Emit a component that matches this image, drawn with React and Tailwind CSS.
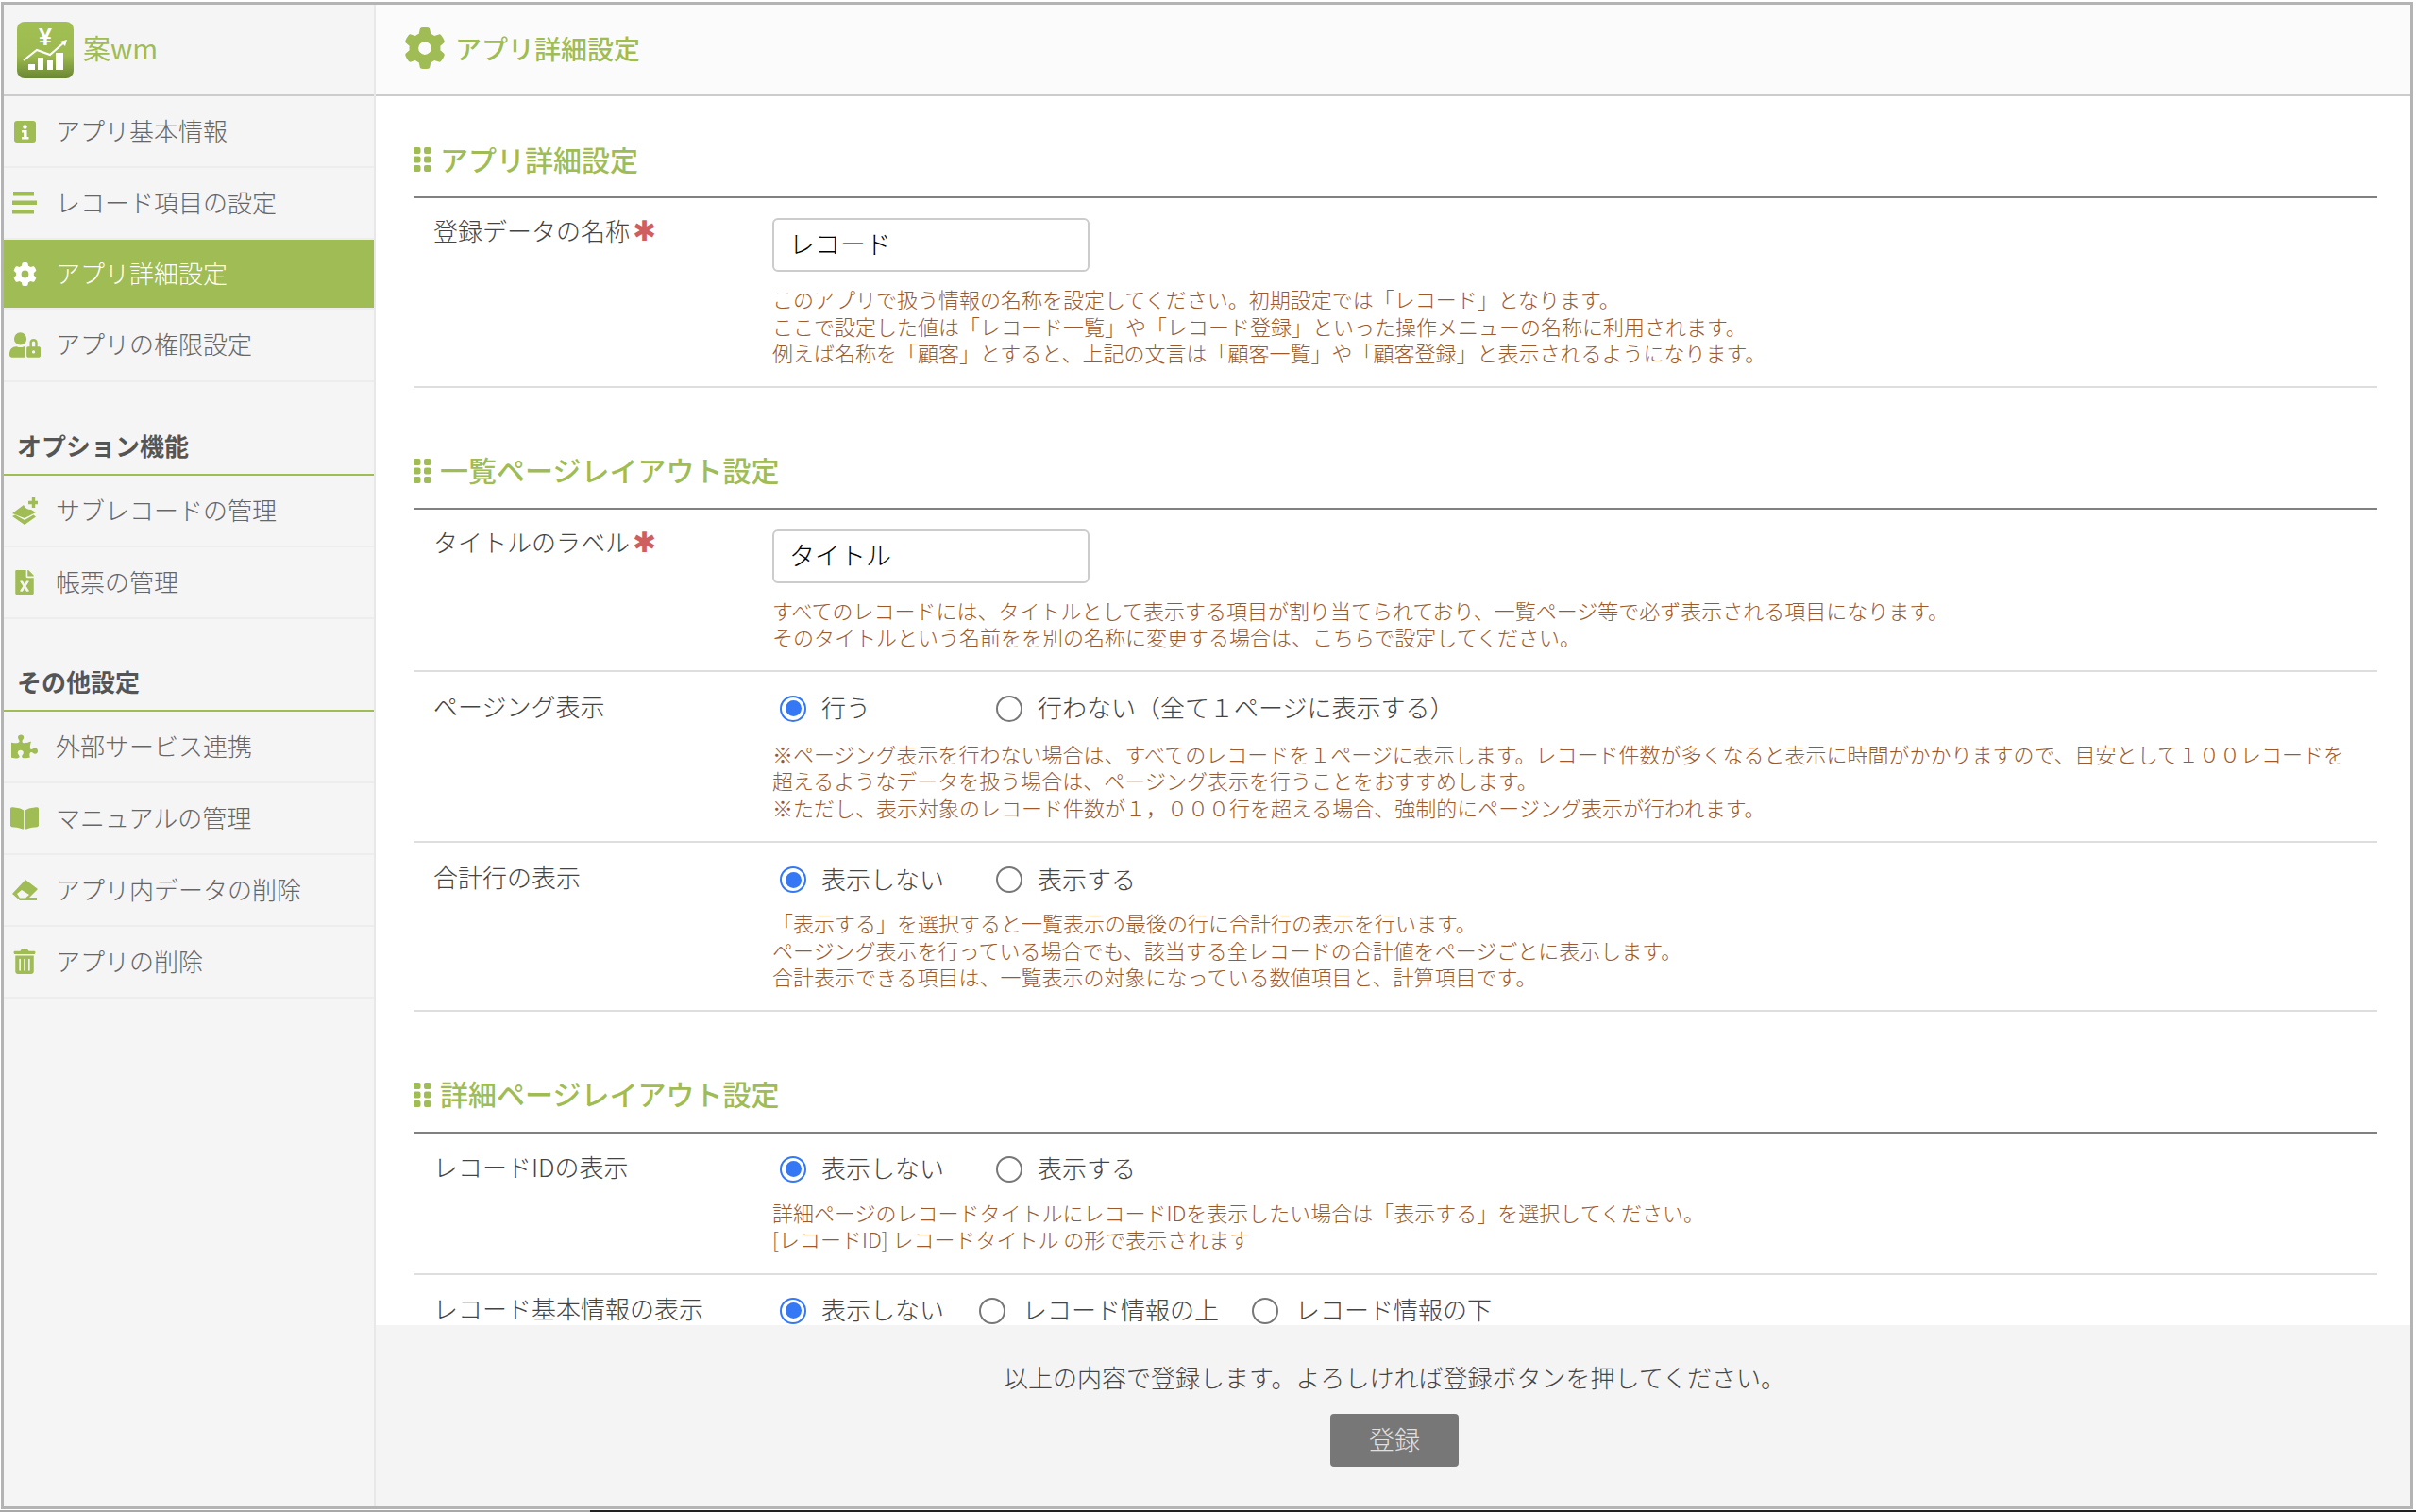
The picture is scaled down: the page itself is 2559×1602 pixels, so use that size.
import React from "react";
import { FaUserLock, FaFileExcel, FaPuzzlePiece, FaBookOpen, FaTrashAlt } from "react-icons/fa";
import { FaGear } from "react-icons/fa6";

const Logo = () => (
  <svg width="60" height="60" viewBox="0 0 60 60" className="shrink-0">
    <defs>
      <linearGradient id="lg" x1="0" y1="0" x2="0" y2="1">
        <stop offset="0" stopColor="#a2bf54" />
        <stop offset="0.6" stopColor="#9dba50" />
        <stop offset="1" stopColor="#6a8734" />
      </linearGradient>
    </defs>
    <rect width="60" height="60" rx="8" fill="url(#lg)" />
    <text x="30" y="25" textAnchor="middle" fontSize="25" fontWeight="700" fill="#fff" fontFamily="Liberation Sans, sans-serif">¥</text>
    <path d="M7 41 L21 30 L35 35 L51 21" stroke="#fff" strokeWidth="2" fill="none" />
    <path d="M46 21 L53 19 L51 26 Z" fill="#fff" />
    <rect x="12" y="45" width="7" height="6" fill="#fff" />
    <rect x="22" y="38" width="6" height="13" fill="#fff" />
    <rect x="32" y="41" width="6" height="10" fill="#fff" />
    <rect x="41" y="33" width="8" height="18" fill="#fff" />
  </svg>
);

const InfoIcon = () => (
  <svg width="23" height="23" viewBox="0 0 23 23">
    <rect width="23" height="23" rx="3" fill="#a0bc54" />
    <circle cx="11.5" cy="6.5" r="2.2" fill="#fff" />
    <path d="M8 10h5.5v7H15.5v2.5H8V17h2v-4.5H8z" fill="#fff" />
  </svg>
);

const BarsIcon = () => (
  <svg width="26" height="24" viewBox="0 0 26 24">
    <rect x="1" y="0" width="22" height="4.5" fill="#a0bc54" />
    <rect x="0" y="9.5" width="26" height="4.5" fill="#a0bc54" />
    <rect x="0" y="19" width="23" height="4.5" fill="#a0bc54" />
  </svg>
);

const LayerPlus = () => (
  <svg width="27" height="29" viewBox="0 0 27 29" className="block">
    <path d="M0 17 L12 8 Q14 13 20 13 L25 16 L13 22 Z" fill="#a0bc54" />
    <path d="M0 20 L3 18.5 L13 24 L22.5 18.5 L25 20.5 L13 29 Z" fill="#a0bc54" />
    <path d="M20.8 0h3.4v3.8H27v3.4h-2.8V11h-3.4V7.2H17V3.8h3.8z" fill="#a0bc54" />
  </svg>
);

const EraserIcon = () => (
  <svg width="27" height="22" viewBox="0 0 27 22" className="block">
    <path fillRule="evenodd" d="M14 0 L27 10 L18 19 H26 V22 H8 L0 15 Z M5 15 L10 11 L18 16 L14 19.5 H8 Z" fill="#a0bc54" />
  </svg>
);

const Grip = () => (
  <svg width="19" height="26" viewBox="0 0 19 26" className="shrink-0">
    {[0, 9.5, 19].map((y) =>
      [0, 11].map((x) => <rect key={`${x}-${y}`} x={x} y={y} width="7.5" height="7" rx="2" fill="#a0bc54" />)
    )}
  </svg>
);

const Item = ({ icon, children, active, h = "h-[76px]" }) => (
  <div className={`flex items-center ${h} pl-[5px] border-b-2 border-[#ededed] ${active ? "bg-[#a0bc54] text-white" : "text-[#666666]"}`}>
    <span className={`w-[34px] flex justify-center ${active ? "text-white" : "text-[#a0bc54]"}`}>{icon}</span>
    <span className="ml-[16px] -mt-[3px] text-[26px] leading-none font-light">{children}</span>
  </div>
);

const SideHead = ({ children, cls }) => (
  <div className={`${cls} pl-[14px] pb-[14px] border-b-2 border-[#a0bc54] text-[26px] leading-[32px] font-bold text-[#555555]`}>{children}</div>
);

const SectionTitle = ({ children, cls }) => (
  <div className={`${cls} flex items-center gap-[9px] h-[46px] text-[30px] font-medium text-[#a0bc54]`}>
    <Grip />
    <span className="-mt-[2px]">{children}</span>
  </div>
);

const Hint = ({ children, cls = "mt-[12px]" }) => (
  <div className={`${cls} text-[22px] leading-[28.5px] font-light text-[#9c5a2c] whitespace-nowrap`}>{children}</div>
);

const Row = ({ label, req, last, children, pt = "pt-[21px]", pb = "pb-[21px]", labelCls = "" }) => (
  <div className={`flex ${pt} ${pb} ${last ? "" : "border-b-2 border-[#dedede]"}`}>
    <div className={`w-[380px] shrink-0 pl-[21px] text-[26px] leading-[36px] font-light text-[#444444] ${labelCls}`}>
      {label}
      {req && <span className="ml-[3px] text-[30px] leading-none text-[#cf5f5f] font-['DejaVu_Sans']">✱</span>}
    </div>
    <div className="flex-1 min-w-0">{children}</div>
  </div>
);

const Input = ({ value }) => (
  <div className="w-[336px] h-[57px] flex items-center px-[16px] pb-[2px] border-2 border-[#cccccc] rounded-[6px] bg-white text-[27px] text-black font-light">{value}</div>
);

const Radio = ({ checked, label, cls, lblCls = "ml-[16px]" }) => (
  <div className={`${cls} flex items-center shrink-0`}>
    <span className={`w-[28px] h-[28px] rounded-full flex items-center justify-center border-2 ${checked ? "border-[#3478f6]" : "border-[#777777]"} bg-white`}>
      {checked && <span className="w-[17px] h-[17px] rounded-full bg-[#3478f6]" />}
    </span>
    <span className={`${lblCls} -mt-[3px] text-[26px] leading-none font-light text-[#444444]`}>{label}</span>
  </div>
);

const Radios = ({ children }) => <div className="flex items-center h-[42px]">{children}</div>;

const Rule = () => <div className="h-[2px] bg-[#808080]" />;

export default function App() {
  return (
    <div className="w-[2559px] h-[1602px] overflow-hidden bg-white pt-[2px] flex flex-col" style={{ fontFamily: '"Noto Sans CJK JP", sans-serif' }}>
      <div className="ml-[1px] w-[2555px] h-[1597px] shrink-0 flex flex-col border-[3px] border-[#b4b4b4] overflow-hidden">
        <div className="flex flex-1 min-h-0">
          <aside className="w-[394px] shrink-0 bg-[#f6f5f6] border-r-2 border-[#e8e8e8] flex flex-col">
            <div className="h-[97px] shrink-0 flex items-center pl-[14px] border-b-2 border-[#cccccc]">
              <Logo />
              <span className="ml-[10px] -mt-[5px] text-[29px] leading-none text-[#a0bc54]">案wm</span>
            </div>
            <Item icon={<InfoIcon />}>アプリ基本情報</Item>
            <Item icon={<BarsIcon />}>レコード項目の設定</Item>
            <Item icon={<FaGear size={25} />} active h="h-[74px]">アプリ詳細設定</Item>
            <Item icon={<FaUserLock size={33} />} h="h-[77px]">アプリの権限設定</Item>
            <SideHead cls="mt-[51px]">オプション機能</SideHead>
            <Item icon={<LayerPlus />}>サブレコードの管理</Item>
            <Item icon={<FaFileExcel size={26} />}>帳票の管理</Item>
            <SideHead cls="mt-[50px]">その他設定</SideHead>
            <Item icon={<FaPuzzlePiece size={28} />}>外部サービス連携</Item>
            <Item icon={<FaBookOpen size={30} />}>マニュアルの管理</Item>
            <Item icon={<EraserIcon />}>アプリ内データの削除</Item>
            <Item icon={<FaTrashAlt size={26} />}>アプリの削除</Item>
          </aside>
          <main className="flex-1 min-w-0 flex flex-col">
            <div className="h-[97px] shrink-0 flex items-center pl-[30px] pb-[4px] gap-[10px] bg-[#fbfbfb] border-b-2 border-[#cccccc] text-[#a0bc54]">
              <FaGear size={44} />
              <span className="text-[28px] font-medium">アプリ詳細設定</span>
            </div>
            <div className="flex-1 min-h-0 overflow-hidden pl-[40px] pr-[35px]">
              <SectionTitle cls="mt-[44px] mb-[16px]">アプリ詳細設定</SectionTitle>
              <Rule />
              <Row label="登録データの名称" req labelCls="-mt-[5px]">
                <Input value="レコード" />
                <Hint cls="mt-[14px]">
                  <div>このアプリで扱う情報の名称を設定してください。初期設定では「レコード」となります。</div>
                  <div>ここで設定した値は「レコード一覧」や「レコード登録」といった操作メニューの名称に利用されます。</div>
                  <div>例えば名称を「顧客」とすると、上記の文言は「顧客一覧」や「顧客登録」と表示されるようになります。</div>
                </Hint>
              </Row>
              <SectionTitle cls="mt-[65px] mb-[16px]">一覧ページレイアウト設定</SectionTitle>
              <Rule />
              <Row label="タイトルのラベル" req labelCls="-mt-[5px]">
                <Input value="タイトル" />
                <Hint cls="mt-[14px]">
                  <div>すべてのレコードには、タイトルとして表示する項目が割り当てられており、一覧ページ等で必ず表示される項目になります。</div>
                  <div>そのタイトルという名前をを別の名称に変更する場合は、こちらで設定してください。</div>
                </Hint>
              </Row>
              <Row label="ページング表示" pt="pt-[18px]" pb="pb-[22px]">
                <Radios>
                  <Radio checked label="行う" cls="ml-[8px] w-[229px]" />
                  <Radio label="行わない（全て１ページに表示する）" />
                </Radios>
                <Hint>
                  <div>※ページング表示を行わない場合は、すべてのレコードを１ページに表示します。レコード件数が多くなると表示に時間がかかりますので、目安として１００レコードを</div>
                  <div>超えるようなデータを扱う場合は、ページング表示を行うことをおすすめします。</div>
                  <div>※ただし、表示対象のレコード件数が１，０００行を超える場合、強制的にページング表示が行われます。</div>
                </Hint>
              </Row>
              <Row label="合計行の表示" pt="pt-[18px]">
                <Radios>
                  <Radio checked label="表示しない" cls="ml-[8px] w-[229px]" />
                  <Radio label="表示する" />
                </Radios>
                <Hint cls="mt-[10px]">
                  <div>「表示する」を選択すると一覧表示の最後の行に合計行の表示を行います。</div>
                  <div>ページング表示を行っている場合でも、該当する全レコードの合計値をページごとに表示します。</div>
                  <div>合計表示できる項目は、一覧表示の対象になっている数値項目と、計算項目です。</div>
                </Hint>
              </Row>
              <SectionTitle cls="mt-[65px] mb-[16px]">詳細ページレイアウト設定</SectionTitle>
              <Rule />
              <Row label="レコードIDの表示" pt="pt-[17px]" pb="pb-[22px]">
                <Radios>
                  <Radio checked label="表示しない" cls="ml-[8px] w-[229px]" />
                  <Radio label="表示する" />
                </Radios>
                <Hint cls="mt-[10px]">
                  <div>詳細ページのレコードタイトルにレコードIDを表示したい場合は「表示する」を選択してください。</div>
                  <div>[レコードID] レコードタイトル の形で表示されます</div>
                </Hint>
              </Row>
              <Row label="レコード基本情報の表示" pt="pt-[17px]" last>
                <Radios>
                  <Radio checked label="表示しない" cls="ml-[8px] w-[211px]" />
                  <Radio label="レコード情報の上" cls="w-[289px]" lblCls="ml-[18px]" />
                  <Radio label="レコード情報の下" lblCls="ml-[18px]" />
                </Radios>
              </Row>
            </div>
            <div className="h-[192px] shrink-0 bg-[#f4f4f4] flex flex-col items-center pt-[37px] pl-[3px]">
              <div className="text-[26px] leading-[36px] font-light text-[#444444]">以上の内容で登録します。よろしければ登録ボタンを押してください。</div>
              <button className="mt-[21px] w-[136px] h-[56px] rounded-[4px] bg-[#777777] pb-[2px] text-[#e0e0e0] text-[27px] font-light">登録</button>
            </div>
          </main>
        </div>
      </div>
      <div className="mt-[1px] h-[2px] flex">
        <div className="w-[625px] bg-[#a8a8a8]" />
        <div className="flex-1 bg-[#222222]" />
      </div>
    </div>
  );
}
